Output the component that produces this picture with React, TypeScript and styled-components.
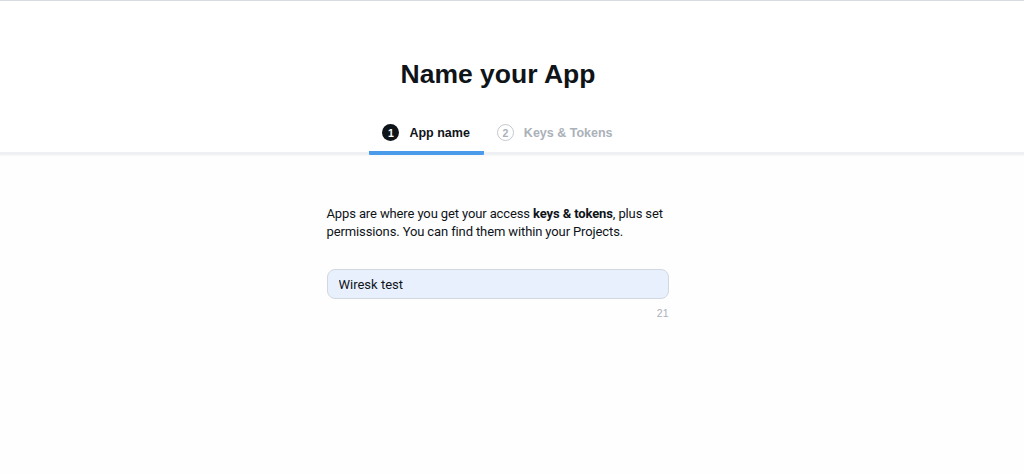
import React from "react";
import styled, { createGlobalStyle } from "styled-components";

const GlobalStyle = createGlobalStyle`
  html, body {
    margin: 0;
    padding: 0;
    background: #fefefe;
  }
  body {
    font-family: "Liberation Sans", Arial, sans-serif;
    color: #0f1419;
  }
  * {
    box-sizing: border-box;
  }
`;

const Page = styled.div`
  min-height: 473px;
  border-top: 1px solid #d8dce2;
  display: flex;
  flex-direction: column;
`;

const Header = styled.header`
  background: #ffffff;
  padding: 57px 28px 0 0;
  display: flex;
  flex-direction: column;
  align-items: center;
  border-bottom: 3px solid #eef0f3;
  box-shadow: 0 1px 2px rgba(15, 20, 25, 0.03);
`;

const Title = styled.h1`
  margin: 0;
  font-size: 26.5px;
  line-height: 32px;
  font-weight: 700;
  color: #0f1419;
`;

const Steps = styled.nav`
  display: flex;
  margin-top: 26px;
`;

const Step = styled.div<{ $active?: boolean }>`
  display: flex;
  align-items: center;
  gap: 10px;
  height: 39px;
  padding: 0 14px 2px 13px;
  margin-bottom: -3px;
  border-bottom: 4px solid ${(p) => (p.$active ? "#4a9be9" : "transparent")};
  border-radius: 0 0 1px 1px;
  font-size: 12.5px;
  font-weight: 700;
  color: ${(p) => (p.$active ? "#0f1419" : "#aab1b8")};
`;

const StepNumber = styled.span<{ $active?: boolean }>`
  width: 17px;
  height: 17px;
  border-radius: 50%;
  display: flex;
  align-items: center;
  justify-content: center;
  font-size: 10.5px;
  font-weight: 700;
  background: ${(p) => (p.$active ? "#0f1419" : "transparent")};
  color: ${(p) => (p.$active ? "#ffffff" : "#aab1b8")};
  border: ${(p) => (p.$active ? "none" : "1.5px solid #c4c9ce")};
`;

const Body = styled.main`
  flex: 1;
  display: flex;
  justify-content: center;
  padding: 50px 29px 0 0;
`;

const Form = styled.section`
  width: 342px;
  display: flex;
  flex-direction: column;
`;

const Intro = styled.p`
  margin: 0;
  font-family: Roboto, "Liberation Sans", Arial, sans-serif;
  font-size: 13px;
  line-height: 18px;
  letter-spacing: -0.12px;
  color: #0f1419;

  strong {
    font-weight: 700;
  }
`;

const NameInput = styled.input`
  margin-top: 28px;
  height: 30px;
  width: 100%;
  padding: 0 11px;
  border: 1px solid #d2d8e0;
  border-radius: 8px;
  background: #e8f0fe;
  font-family: Roboto, "Liberation Sans", Arial, sans-serif;
  font-size: 13px;
  color: #0f1419;
  outline: none;
`;

const Counter = styled.span`
  align-self: flex-end;
  margin-top: 8px;
  font-size: 10.5px;
  color: #aab1b8;
`;

export default function App() {
  return (
    <>
      <GlobalStyle />
      <Page>
        <Header>
          <Title>Name your App</Title>
          <Steps>
            <Step $active>
              <StepNumber $active>1</StepNumber>
              App name
            </Step>
            <Step>
              <StepNumber>2</StepNumber>
              Keys &amp; Tokens
            </Step>
          </Steps>
        </Header>
        <Body>
          <Form>
            <Intro>
              Apps are where you get your access <strong>keys &amp; tokens</strong>, plus set
              permissions. You can find them within your Projects.
            </Intro>
            <NameInput defaultValue="Wiresk test" />
            <Counter>21</Counter>
          </Form>
        </Body>
      </Page>
    </>
  );
}
